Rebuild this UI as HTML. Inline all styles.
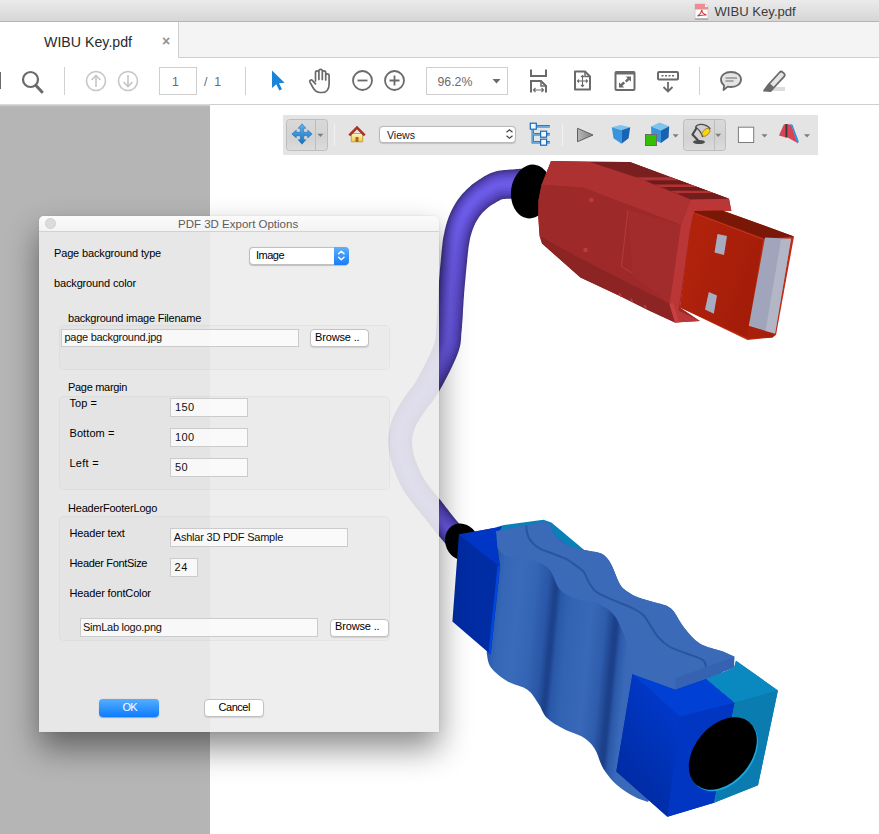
<!DOCTYPE html>
<html>
<head>
<meta charset="utf-8">
<title>WIBU Key.pdf</title>
<style>
html,body{margin:0;padding:0;}
body{width:879px;height:834px;overflow:hidden;position:relative;background:#fff;font-family:"Liberation Sans",sans-serif;}
.abs{position:absolute;}
.t{position:absolute;white-space:nowrap;line-height:1;}
#titlebar{left:0;top:0;width:879px;height:21px;background:linear-gradient(#ebebeb,#d6d6d6);border-bottom:1px solid #b4b4b4;}
#tabbar{left:0;top:22px;width:879px;height:35px;background:#f4f4f4;border-bottom:1px solid #cfcfcf;}
#tab{left:0;top:22px;width:178px;height:36px;background:#fff;border-right:1px solid #cfcfcf;}
#toolbar{left:0;top:58px;width:879px;height:46px;background:#fff;border-bottom:1px solid #cfcfcf;}
#gray{left:0;top:105px;width:210px;height:729px;background:#b5b5b5;}
#grayshade{left:0;top:104px;width:210px;height:3px;background:linear-gradient(rgba(220,220,220,1),rgba(200,200,200,0));}
#tb3d{left:283px;top:115px;width:535px;height:40px;background:#e4e4e4;}
.sep{position:absolute;width:1px;background:#d0d0d0;}
.box{position:absolute;box-sizing:border-box;border:1px solid #cfcfcf;background:#fff;}
/* dialog */
#dlg{left:39px;top:216px;width:400px;height:516px;background:rgba(236,236,236,.9);box-shadow:0 16px 32px rgba(0,0,0,.46),0 0 1.5px rgba(0,0,0,.15);border-radius:5px 5px 0 0;}
#dlgtitle{left:0;top:0;width:400px;height:15px;background:linear-gradient(rgba(252,252,252,.92),rgba(244,244,244,.92));border-bottom:1px solid #d2d2d2;border-radius:5px 5px 0 0;}
.lbl{position:absolute;white-space:nowrap;line-height:1;font-size:11px;letter-spacing:-0.15px;color:#000;}
.inp{position:absolute;box-sizing:border-box;border:1px solid #cbcbcb;background:rgba(255,255,255,.75);}
.inp span{position:absolute;white-space:nowrap;line-height:1;font-size:11px;color:#111;font-family:"Liberation Sans",sans-serif;}
.grp{position:absolute;box-sizing:border-box;border:1px solid rgba(0,0,0,.035);border-radius:5px;background:rgba(0,0,0,.012);}
.btn{position:absolute;box-sizing:border-box;border:1px solid #c2c2c2;border-radius:4px;background:#fff;box-shadow:0 1px 1px rgba(0,0,0,.12);}
</style>
</head>
<body>
<!-- window chrome -->
<div id="titlebar" class="abs"></div>
<div class="t" id="wtitle" style="left:714.5px;top:4.5px;font-size:13.1px;color:#3c3c3c;">WIBU Key.pdf</div>
<svg class="abs" style="left:693px;top:3px" width="18" height="17" viewBox="0 0 18 17">
<path d="M2,1 H12 L15,4 V16 H2 Z" fill="#fbfbfb" stroke="#c9c9c9" stroke-width="0.8"/>
<path d="M2,1 H12 V4 H15 V6.500 H2 Z" fill="#ea8e94"/>
<path d="M4.500,13 C7,11.500 8.500,9 8.800,6.800 C9,9.500 11,11.500 13.500,12 C10.500,11.800 7,12.300 4.500,13 Z" fill="none" stroke="#d0383f" stroke-width="1.100"/>
<path d="M2,16 H15" stroke="#8a8a8a" stroke-width="1"/>
</svg>
<div id="tabbar" class="abs"></div>
<div id="tab" class="abs"></div>
<div class="t" id="tabtitle" style="left:44px;top:35px;font-size:14.2px;color:#2a2a2a;">WIBU Key.pdf</div>
<div class="t" style="left:161.900px;top:34.200px;font-size:14px;font-weight:bold;color:#929292;">×</div>
<div id="toolbar" class="abs"></div>
<div id="gray" class="abs"></div>
<div id="grayshade" class="abs"></div>


<!-- main toolbar icons -->
<div class="box" style="left:159px;top:67px;width:38px;height:28px"></div>
<div class="box" style="left:426px;top:67px;width:82px;height:28px"></div>

<svg class="abs" style="left:0;top:58px" width="879" height="46" viewBox="0 58 879 46">
<g fill="none" stroke="#6a6a6a" stroke-width="2">
<rect x="-2" y="72" width="3" height="17" fill="#6a6a6a" stroke="none"/>
<circle cx="30.5" cy="79.5" r="7.5" stroke-width="2.2"/>
<path d="M36,85.5 L42,92" stroke-width="3" stroke-linecap="round"/>
</g>
<g fill="none" stroke="#c6c6c6" stroke-width="1.6">
<circle cx="96" cy="81" r="9.5"/>
<path d="M96,87 V76 M91.5,80 L96,75.5 L100.500,80"/>
<circle cx="128" cy="81" r="9.500"/>
<path d="M128,75 V86 M123.500,82 L128,86.500 L132.500,82"/>
</g>
<path d="M272,70.500 L272,88 L276.300,84.300 L279.300,90.600 L282,89.300 L279,83.200 L284.600,82.800 Z" fill="#1a84d8"/>
<!-- hand -->
<g fill="none" stroke="#6a6a6a" stroke-width="1.7" stroke-linecap="round" stroke-linejoin="round">
<path d="M315.500,81 V72.500 a1.700,1.700 0 0 1 3.400,0 V79.500 M318.900,72.500 V71 a1.700,1.700 0 0 1 3.400,0 V79.500 M322.300,72.500 a1.700,1.700 0 0 1 3.400,0 V80 M325.700,75.500 a1.700,1.700 0 0 1 3.400,0 V84 c0,5 -2.500,8.500 -7,8.500 h-2 c-3.500,0 -5.500,-2 -7.200,-5 l-3,-5.300 c-0.800,-1.600 1.200,-3 2.600,-1.600 l3,3.200"/>
</g>
<g fill="none" stroke="#6a6a6a" stroke-width="1.8">
<circle cx="362.500" cy="80.500" r="9.500"/>
<path d="M357.500,80.500 H367.500"/>
<circle cx="394.500" cy="80.500" r="9.500"/>
<path d="M389.500,80.500 H399.500 M394.500,75.500 V85.500"/>
</g>
<path d="M492.500,79 H500.500 L496.500,83.500 Z" fill="#6a6a6a"/>
<!-- fit width -->
<g fill="none" stroke="#6a6a6a" stroke-width="2">
<path d="M531,69.500 V76 H546 V69.500"/>
<path d="M531,92.500 V81 H541 L546,86 V92.500"/>
<path d="M541,81 V86 H546" stroke-width="1.500"/>
<path d="M533.500,90 H543.500 M535.500,88 L533.500,90 L535.500,92 M541.500,88 L543.500,90 L541.500,92" stroke-width="1.200"/>
</g>
<!-- fit page -->
<g fill="none" stroke="#6a6a6a" stroke-width="2">
<path d="M575,71.500 H585 L590,76.500 V89.500 H575 Z" stroke-linejoin="round"/>
<path d="M585,71.500 V76.500 H590" stroke-width="1.500"/>
<path d="M582.500,75.500 V86.500 M577.500,81 H587.500 M581,77 L582.500,75.500 L584,77 M581,85 L582.500,86.500 L584,85 M579,79.500 L577.500,81 L579,82.500 M586,79.500 L587.500,81 L586,82.500" stroke-width="1.100"/>
</g>
<!-- fullscreen -->
<g fill="none" stroke="#6a6a6a" stroke-width="2">
<rect x="615.500" y="72" width="19" height="18" rx="1"/>
<path d="M615.500,73 H634.500" stroke-width="3"/>
</g>
<path d="M625.800,76.500 h5.200 v5.200 l-1.700,-1.700 l-2.600,2.600 l-1.800,-1.800 l2.600,-2.600 Z M624.200,87.500 h-5.200 v-5.200 l1.700,1.700 l2.600,-2.600 l1.800,1.800 l-2.600,2.600 Z" fill="#6a6a6a"/>
<!-- keyboard download -->
<g fill="none" stroke="#6a6a6a" stroke-width="2">
<rect x="658" y="72" width="20" height="7.500" rx="1"/>
<path d="M668,82 V91 M663.500,87 L668,91.500 L672.500,87" stroke-width="1.800"/>
</g>
<path d="M661.500,75 h2 v1.600 h-2 Z M665,75 h2 v1.600 h-2 Z M668.500,75 h2 v1.600 h-2 Z M672,75 h2 v1.600 h-2 Z" fill="#6a6a6a"/>
<!-- comment -->
<g fill="#e4e4e4" stroke="#6a6a6a" stroke-width="1.800" stroke-linejoin="round">
<path d="M731,72 c6,0 10,3.200 10,7.500 s-4,7.500 -10,7.500 c-1.200,0 -2.300,-0.100 -3.300,-0.400 l-4.200,3.400 l0.600,-4.600 c-2,-1.400 -3.100,-3.500 -3.100,-5.900 c0,-4.300 4,-7.500 10,-7.500 Z"/>
</g>
<path d="M725.500,78 H737 M725.500,81 H733.500" stroke="#6a6a6a" stroke-width="1.100" fill="none"/>
<!-- highlighter -->
<rect x="767" y="87" width="18" height="4" fill="#dcdcdc"/>
<g stroke="#6a6a6a" stroke-width="1.800" stroke-linejoin="round">
<path d="M769,84 L779.500,72.500 c1,-1.100 2.300,-1.100 3.300,-0.200 l1.200,1.100 c1,0.900 1,2.300 0.100,3.300 L773.500,88 Z" fill="#e4e4e4"/>
<path d="M768.500,84.500 L773,88.500 L770.500,91 L764,90.700 Z" fill="#6a6a6a"/>
</g>
</svg>
<div class="sep" style="left:64px;top:67px;height:28px"></div>
<div class="sep" style="left:245px;top:67px;height:28px"></div>
<div class="sep" style="left:699px;top:67px;height:28px"></div>
<div class="t" style="left:172px;top:75.5px;font-size:12.3px;color:#6a6a6a;">1</div>
<div class="t" style="left:204px;top:75.5px;font-size:12.3px;color:#6a6a6a;">/&nbsp;&nbsp;1</div>
<div class="t" id="zoomtxt" style="left:437.500px;top:75.5px;font-size:12.3px;color:#6a6a6a;">96.2%</div>

<!-- 3D model -->
<svg id="model" class="abs" style="left:0;top:105px" width="879" height="729" viewBox="0 105 879 729">
<defs>
<linearGradient id="gside" gradientUnits="userSpaceOnUse" x1="492.5" y1="600" x2="672.5" y2="617.6">
<stop offset="0" stop-color="#2a58a8"/>
<stop offset="0.05" stop-color="#3667b7"/>
<stop offset="0.14" stop-color="#3a6bbb"/>
<stop offset="0.23" stop-color="#3464b4"/>
<stop offset="0.30" stop-color="#2a56a6"/>
<stop offset="0.335" stop-color="#1d428c"/>
<stop offset="0.35" stop-color="#1d428c"/>
<stop offset="0.375" stop-color="#2a58a8"/>
<stop offset="0.43" stop-color="#3263b3"/>
<stop offset="0.55" stop-color="#3868b7"/>
<stop offset="0.63" stop-color="#2f5dad"/>
<stop offset="0.685" stop-color="#1c408a"/>
<stop offset="0.70" stop-color="#1c408a"/>
<stop offset="0.725" stop-color="#2c5aaa"/>
<stop offset="0.77" stop-color="#3969b8"/>
<stop offset="1" stop-color="#3a6ab8"/>
</linearGradient>
<linearGradient id="gleft" gradientUnits="userSpaceOnUse" x1="616" y1="771" x2="680" y2="717">
<stop offset="0" stop-color="#002ca4"/><stop offset="1" stop-color="#0038c8"/>
</linearGradient>
<linearGradient id="gplug" gradientUnits="userSpaceOnUse" x1="690" y1="260" x2="765" y2="285">
<stop offset="0" stop-color="#b0220c"/><stop offset="1" stop-color="#a21c08"/>
</linearGradient>
</defs>
<!-- cable -->
<polygon points="526.0,168.3 525.2,168.4 524.1,168.4 522.9,168.5 521.4,168.7 519.9,168.8 518.2,168.9 516.5,169.1 514.8,169.2 513.1,169.4 511.6,169.5 510.3,169.6 509.0,169.7 507.6,169.8 506.0,170.0 504.2,170.1 502.4,170.3 500.4,170.5 498.4,170.8 496.2,171.3 493.9,171.9 491.7,172.7 489.6,173.6 487.7,174.5 485.9,175.4 484.3,176.3 482.9,177.2 481.5,178.1 480.3,178.9 479.3,179.5 478.4,180.1 477.5,180.7 476.5,181.4 475.5,182.0 474.6,182.7 473.6,183.4 472.7,184.1 471.8,184.8 470.9,185.6 470.0,186.4 469.2,187.2 468.3,188.0 467.4,188.8 466.4,189.7 465.4,190.8 464.3,191.9 463.2,193.0 462.0,194.3 460.8,195.7 459.7,197.2 458.5,198.7 457.5,200.1 456.6,201.6 455.6,203.1 454.6,204.7 453.7,206.3 452.8,208.0 451.9,209.8 451.0,211.6 450.2,213.4 449.4,215.3 448.6,217.2 448.0,219.1 447.3,221.0 446.7,222.9 446.1,224.9 445.6,226.9 445.1,229.0 444.6,231.1 444.2,233.2 443.7,235.4 443.3,237.6 442.9,239.8 442.6,242.1 442.4,244.3 442.1,246.5 441.9,248.8 441.6,251.2 441.4,253.6 441.2,256.1 440.9,258.7 440.7,261.5 440.4,264.5 440.1,267.6 439.8,270.8 439.6,274.1 439.3,277.5 439.0,280.9 438.8,284.4 438.5,287.9 438.3,291.5 438.0,295.2 437.8,299.1 437.6,303.1 437.4,307.2 437.2,311.3 437.0,315.2 436.7,319.0 436.5,322.6 436.3,325.9 436.0,328.9 435.8,331.7 435.7,334.1 435.6,336.1 435.5,337.6 435.4,338.8 435.3,339.7 435.1,340.6 434.8,341.8 434.3,343.4 433.6,345.5 432.6,348.1 431.3,351.2 429.7,354.7 428.0,358.3 426.1,362.2 424.2,366.0 422.3,369.7 420.4,373.3 418.7,376.5 417.1,379.2 415.8,381.5 414.6,383.5 413.4,385.2 412.2,386.9 411.0,388.5 409.7,390.1 408.4,391.8 407.0,393.6 405.6,395.6 404.2,397.6 403.0,399.5 401.9,401.3 400.8,403.1 399.6,404.9 398.5,406.7 397.4,408.6 396.3,410.6 395.3,412.6 394.3,414.7 393.3,416.8 392.5,418.8 391.8,420.8 391.1,422.8 390.5,424.9 390.0,427.0 389.5,429.1 389.1,431.2 388.7,433.3 388.5,435.5 388.3,437.7 388.2,439.9 388.2,442.1 388.3,444.3 388.5,446.5 388.7,448.6 389.0,450.7 389.3,452.7 389.7,454.7 390.1,456.7 390.5,458.6 391.0,460.7 391.6,462.7 392.2,464.8 392.9,466.7 393.6,468.7 394.3,470.6 395.0,472.4 395.8,474.2 396.5,476.0 397.2,477.7 397.9,479.2 398.6,480.8 399.3,482.3 400.0,483.9 400.8,485.6 401.7,487.3 402.7,489.0 403.7,490.9 405.0,492.8 406.3,494.8 407.9,497.0 409.6,499.3 411.4,501.7 413.2,504.0 415.2,506.4 417.1,508.8 419.0,511.1 420.8,513.3 422.5,515.4 424.0,517.3 425.4,519.1 426.8,520.9 428.1,522.6 429.4,524.2 430.6,525.8 431.9,527.5 433.2,529.1 434.5,530.7 435.8,532.4 437.2,534.1 438.7,535.8 440.3,537.6 441.9,539.5 443.6,541.4 445.2,543.2 446.7,544.9 448.2,546.4 449.4,547.8 450.5,549.0 451.3,549.9 468.7,534.1 467.9,533.2 466.8,532.0 465.5,530.6 464.1,529.1 462.6,527.4 461.1,525.7 459.5,523.9 458.0,522.2 456.5,520.5 455.2,518.9 454.0,517.5 452.8,516.0 451.6,514.5 450.4,513.0 449.2,511.4 448.0,509.8 446.7,508.2 445.3,506.5 443.9,504.6 442.4,502.7 440.8,500.6 439.0,498.5 437.2,496.2 435.3,493.9 433.4,491.6 431.6,489.4 429.9,487.2 428.3,485.1 426.9,483.2 425.7,481.6 424.7,480.0 423.8,478.6 423.1,477.4 422.4,476.2 421.8,475.0 421.2,473.9 420.7,472.6 420.1,471.3 419.5,469.9 418.8,468.3 418.1,466.8 417.5,465.2 416.8,463.7 416.2,462.1 415.6,460.6 415.1,459.1 414.6,457.6 414.2,456.2 413.8,454.8 413.5,453.4 413.1,451.9 412.9,450.3 412.6,448.8 412.4,447.3 412.2,445.9 412.1,444.5 412.0,443.1 412.0,441.8 412.0,440.6 412.1,439.3 412.2,438.1 412.4,436.8 412.7,435.5 412.9,434.3 413.3,433.0 413.6,431.6 414.1,430.3 414.6,429.0 415.1,427.6 415.7,426.2 416.3,425.0 416.9,423.7 417.6,422.4 418.5,421.0 419.4,419.5 420.3,418.0 421.4,416.4 422.5,414.8 423.6,413.0 424.8,411.4 425.8,409.9 426.8,408.5 427.9,407.1 429.2,405.5 430.6,403.8 432.1,401.9 433.7,399.7 435.4,397.3 437.1,394.6 438.9,391.8 440.6,388.6 442.5,385.2 444.5,381.4 446.6,377.5 448.7,373.5 450.7,369.4 452.6,365.4 454.4,361.5 456.0,357.9 457.4,354.5 458.5,351.5 459.3,348.8 460.0,346.2 460.5,343.8 460.8,341.5 461.0,339.4 461.1,337.5 461.2,335.6 461.3,333.6 461.6,331.1 461.9,328.0 462.1,324.4 462.4,320.7 462.7,316.7 462.9,312.7 463.1,308.6 463.4,304.6 463.6,300.6 463.9,296.9 464.1,293.3 464.4,289.9 464.7,286.5 465.0,283.0 465.3,279.7 465.6,276.4 465.9,273.1 466.2,270.0 466.5,267.0 466.8,264.1 467.1,261.3 467.3,258.6 467.6,256.1 467.8,253.8 468.1,251.6 468.3,249.5 468.5,247.5 468.8,245.7 469.1,243.9 469.4,242.2 469.7,240.4 470.0,238.7 470.4,237.1 470.8,235.5 471.3,233.9 471.7,232.4 472.2,231.0 472.7,229.6 473.2,228.3 473.7,226.9 474.2,225.7 474.8,224.5 475.3,223.3 475.9,222.2 476.6,221.1 477.2,220.0 477.9,218.9 478.6,217.8 479.3,216.8 480.0,215.8 480.7,214.9 481.3,214.2 481.8,213.5 482.5,212.8 483.2,212.1 483.9,211.4 484.6,210.7 485.4,210.0 486.2,209.3 487.0,208.5 487.8,207.8 488.5,207.3 489.0,206.8 489.5,206.4 489.9,206.2 490.2,205.9 490.6,205.6 491.1,205.4 491.6,205.0 492.3,204.6 493.2,204.1 494.3,203.4 495.4,202.7 496.5,202.1 497.5,201.4 498.5,200.9 499.5,200.4 500.3,200.0 501.0,199.6 501.6,199.4 502.1,199.3 502.6,199.2 503.2,199.1 504.1,199.0 505.1,198.9 506.3,198.8 507.6,198.8 509.1,198.7 510.6,198.7 512.3,198.6 514.0,198.5 515.5,198.4 517.0,198.3 518.6,198.2 520.2,198.1 521.8,198.0 523.3,197.9 524.7,197.9 526.0,197.8 527.1,197.8 528.0,197.7" fill="#42358c"/>
<polygon points="526.1,169.8 525.3,169.8 524.2,169.9 523.0,170.0 521.5,170.1 520.0,170.2 518.3,170.4 516.6,170.5 514.9,170.7 513.2,170.8 511.7,171.0 510.4,171.1 509.1,171.2 507.6,171.3 506.1,171.4 504.4,171.5 502.5,171.7 500.6,171.9 498.6,172.2 496.5,172.7 494.3,173.3 492.2,174.0 490.2,174.9 488.3,175.8 486.6,176.7 485.0,177.6 483.6,178.5 482.3,179.3 481.1,180.1 480.1,180.7 479.1,181.3 478.2,181.9 477.2,182.5 476.3,183.2 475.4,183.8 474.5,184.5 473.6,185.2 472.7,185.9 471.8,186.6 471.0,187.4 470.1,188.2 469.3,189.0 468.4,189.8 467.4,190.8 466.3,191.8 465.3,192.8 464.2,194.0 463.0,195.3 461.9,196.6 460.7,198.0 459.6,199.5 458.7,200.9 457.7,202.4 456.7,203.8 455.8,205.4 454.9,207.0 454.0,208.7 453.1,210.4 452.2,212.2 451.4,214.0 450.6,215.8 449.9,217.7 449.2,219.5 448.6,221.4 448.0,223.3 447.4,225.3 446.9,227.3 446.4,229.3 445.9,231.4 445.4,233.5 445.0,235.6 444.6,237.8 444.3,240.0 443.9,242.2 443.7,244.5 443.4,246.7 443.2,249.0 443.0,251.3 442.7,253.7 442.5,256.2 442.2,258.8 442.0,261.7 441.7,264.6 441.4,267.7 441.1,270.9 440.9,274.2 440.6,277.6 440.3,281.0 440.1,284.5 439.8,288.0 439.5,291.6 439.3,295.3 439.1,299.2 438.9,303.2 438.7,307.3 438.4,311.3 438.2,315.3 438.0,319.1 437.8,322.7 437.6,326.0 437.3,329.0 437.1,331.8 436.9,334.2 436.8,336.2 436.8,337.7 436.7,338.9 436.6,339.9 436.4,340.9 436.1,342.1 435.5,343.8 434.8,345.9 433.8,348.6 432.4,351.7 430.8,355.2 429.1,358.9 427.2,362.7 425.3,366.6 423.4,370.3 421.5,373.8 419.8,377.1 418.2,379.9 416.9,382.2 415.6,384.1 414.4,386.0 413.2,387.6 411.9,389.3 410.7,390.9 409.4,392.6 408.0,394.4 406.6,396.3 405.3,398.3 404.1,400.2 402.9,402.0 401.8,403.7 400.7,405.5 399.5,407.4 398.4,409.2 397.4,411.2 396.3,413.1 395.4,415.2 394.5,417.2 393.7,419.2 392.9,421.2 392.3,423.2 391.7,425.2 391.1,427.3 390.6,429.3 390.2,431.4 389.9,433.5 389.7,435.6 389.5,437.7 389.4,439.9 389.4,442.1 389.5,444.3 389.6,446.4 389.9,448.5 390.1,450.5 390.5,452.5 390.8,454.5 391.3,456.4 391.7,458.4 392.2,460.4 392.7,462.4 393.4,464.4 394.0,466.4 394.7,468.3 395.4,470.1 396.1,472.0 396.8,473.8 397.6,475.5 398.3,477.2 399.0,478.8 399.6,480.3 400.3,481.9 401.1,483.4 401.9,485.1 402.7,486.7 403.7,488.5 404.8,490.3 405.9,492.2 407.3,494.2 408.8,496.3 410.5,498.6 412.3,500.9 414.2,503.3 416.1,505.7 418.0,508.0 419.9,510.3 421.7,512.5 423.4,514.6 424.9,516.6 426.3,518.4 427.7,520.1 429.0,521.8 430.3,523.5 431.6,525.1 432.8,526.7 434.1,528.4 435.4,530.0 436.7,531.6 438.1,533.3 439.6,535.0 441.2,536.9 442.8,538.7 444.4,540.6 446.1,542.4 447.6,544.1 449.0,545.6 450.3,547.0 451.3,548.2 452.1,549.1 467.9,534.9 467.0,534.0 465.9,532.8 464.7,531.4 463.3,529.9 461.8,528.2 460.2,526.5 458.6,524.7 457.1,523.0 455.6,521.3 454.3,519.7 453.1,518.2 451.9,516.7 450.7,515.2 449.5,513.7 448.3,512.2 447.0,510.6 445.8,508.9 444.4,507.2 443.0,505.4 441.5,503.4 439.8,501.4 438.1,499.2 436.2,497.0 434.4,494.7 432.5,492.4 430.7,490.1 428.9,487.9 427.3,485.8 425.9,483.9 424.7,482.2 423.7,480.7 422.8,479.3 422.0,478.0 421.4,476.7 420.7,475.5 420.2,474.4 419.6,473.1 419.0,471.8 418.4,470.3 417.7,468.8 417.0,467.2 416.4,465.7 415.7,464.1 415.1,462.6 414.5,461.0 414.0,459.5 413.5,458.0 413.1,456.5 412.7,455.1 412.3,453.6 412.0,452.1 411.7,450.5 411.4,449.0 411.2,447.5 411.0,446.0 410.9,444.6 410.8,443.2 410.8,441.8 410.8,440.5 410.9,439.3 411.1,438.0 411.2,436.6 411.5,435.3 411.8,434.0 412.1,432.7 412.5,431.3 412.9,429.9 413.4,428.6 414.0,427.2 414.5,425.8 415.2,424.5 415.8,423.1 416.6,421.8 417.4,420.3 418.3,418.9 419.3,417.3 420.3,415.7 421.4,414.1 422.6,412.4 423.7,410.7 424.8,409.2 425.8,407.8 427.0,406.3 428.2,404.8 429.6,403.0 431.1,401.1 432.7,399.0 434.4,396.6 436.1,394.0 437.8,391.1 439.5,388.0 441.4,384.6 443.4,380.8 445.5,376.9 447.6,372.9 449.6,368.9 451.5,364.9 453.3,361.0 454.9,357.4 456.2,354.1 457.3,351.1 458.1,348.4 458.8,345.9 459.2,343.6 459.5,341.3 459.7,339.3 459.8,337.4 459.9,335.6 460.1,333.5 460.3,331.0 460.6,327.9 460.9,324.3 461.1,320.6 461.4,316.6 461.6,312.6 461.9,308.5 462.1,304.5 462.3,300.6 462.6,296.8 462.9,293.2 463.1,289.8 463.4,286.3 463.7,282.9 464.0,279.6 464.3,276.2 464.6,273.0 464.9,269.9 465.2,266.8 465.5,263.9 465.8,261.2 466.0,258.5 466.3,256.0 466.5,253.6 466.8,251.4 467.0,249.3 467.2,247.4 467.5,245.5 467.8,243.7 468.1,241.9 468.4,240.2 468.8,238.5 469.1,236.8 469.6,235.1 470.0,233.6 470.5,232.1 470.9,230.6 471.4,229.2 471.9,227.8 472.5,226.5 473.0,225.2 473.5,223.9 474.1,222.8 474.7,221.6 475.4,220.4 476.1,219.3 476.7,218.2 477.4,217.1 478.2,216.0 478.9,215.0 479.6,214.1 480.2,213.3 480.8,212.6 481.5,211.9 482.2,211.2 482.9,210.4 483.7,209.7 484.4,209.0 485.3,208.3 486.1,207.5 486.9,206.8 487.6,206.2 488.1,205.7 488.6,205.4 489.0,205.1 489.4,204.8 489.8,204.5 490.3,204.2 490.9,203.8 491.6,203.4 492.5,202.9 493.5,202.2 494.7,201.5 495.8,200.9 496.8,200.2 497.8,199.7 498.8,199.1 499.7,198.7 500.5,198.3 501.2,198.1 501.7,197.9 502.3,197.8 503.0,197.7 503.9,197.6 505.0,197.5 506.2,197.4 507.5,197.3 509.0,197.3 510.6,197.2 512.2,197.1 513.9,197.0 515.4,196.9 516.9,196.8 518.5,196.7 520.1,196.6 521.7,196.6 523.2,196.5 524.6,196.4 525.9,196.3 527.0,196.3 527.9,196.2" fill="#4a3ba2"/>
<polygon points="526.2,171.4 525.4,171.4 524.3,171.5 523.1,171.6 521.6,171.7 520.1,171.8 518.4,172.0 516.7,172.1 515.0,172.3 513.4,172.4 511.9,172.6 510.5,172.7 509.2,172.8 507.7,172.9 506.1,173.0 504.5,173.1 502.7,173.3 500.8,173.5 498.9,173.8 496.8,174.2 494.8,174.8 492.7,175.5 490.8,176.3 489.0,177.2 487.4,178.0 485.8,178.9 484.4,179.8 483.1,180.6 481.9,181.4 480.9,182.0 480.0,182.6 479.0,183.2 478.1,183.8 477.2,184.5 476.3,185.1 475.4,185.7 474.5,186.4 473.7,187.1 472.8,187.8 472.0,188.6 471.1,189.3 470.3,190.1 469.4,191.0 468.4,191.9 467.4,192.9 466.3,193.9 465.3,195.0 464.2,196.3 463.0,197.6 461.9,199.0 460.9,200.4 459.9,201.8 458.9,203.2 458.0,204.7 457.1,206.2 456.2,207.8 455.3,209.4 454.4,211.1 453.5,212.8 452.7,214.6 452.0,216.4 451.3,218.2 450.6,220.0 450.0,221.9 449.4,223.8 448.8,225.7 448.3,227.7 447.8,229.7 447.3,231.7 446.9,233.8 446.4,235.9 446.0,238.1 445.7,240.3 445.4,242.4 445.1,244.6 444.9,246.9 444.6,249.1 444.4,251.4 444.2,253.8 443.9,256.3 443.7,259.0 443.4,261.8 443.1,264.8 442.9,267.9 442.6,271.1 442.3,274.3 442.0,277.7 441.8,281.1 441.5,284.6 441.2,288.1 441.0,291.7 440.7,295.4 440.5,299.3 440.3,303.3 440.1,307.3 439.9,311.4 439.7,315.4 439.4,319.2 439.2,322.8 439.0,326.1 438.7,329.1 438.5,331.9 438.3,334.3 438.2,336.3 438.2,337.8 438.1,339.1 437.9,340.1 437.7,341.2 437.4,342.5 436.9,344.2 436.1,346.4 435.0,349.1 433.7,352.3 432.1,355.8 430.3,359.5 428.5,363.3 426.5,367.2 424.6,370.9 422.7,374.5 421.0,377.8 419.4,380.6 418.0,382.9 416.8,384.9 415.5,386.7 414.3,388.5 413.0,390.1 411.7,391.7 410.4,393.4 409.1,395.2 407.7,397.1 406.4,399.1 405.2,400.9 404.1,402.7 402.9,404.5 401.8,406.3 400.7,408.1 399.6,409.9 398.5,411.8 397.5,413.7 396.6,415.7 395.7,417.7 394.9,419.7 394.2,421.7 393.5,423.6 392.9,425.6 392.4,427.6 391.9,429.6 391.5,431.6 391.2,433.7 391.0,435.7 390.8,437.8 390.7,440.0 390.7,442.1 390.8,444.2 390.9,446.3 391.2,448.3 391.4,450.3 391.8,452.3 392.1,454.3 392.5,456.2 393.0,458.1 393.4,460.1 394.0,462.1 394.6,464.0 395.2,465.9 395.9,467.8 396.6,469.7 397.3,471.5 398.0,473.3 398.8,475.0 399.5,476.7 400.2,478.3 400.8,479.8 401.5,481.3 402.2,482.9 403.0,484.5 403.9,486.1 404.8,487.8 405.9,489.6 407.0,491.5 408.3,493.4 409.9,495.6 411.5,497.8 413.3,500.1 415.2,502.5 417.1,504.9 419.0,507.2 420.9,509.5 422.7,511.7 424.4,513.8 425.9,515.8 427.4,517.6 428.7,519.3 430.0,521.0 431.3,522.7 432.6,524.3 433.8,525.9 435.1,527.6 436.4,529.2 437.7,530.8 439.1,532.5 440.6,534.2 442.1,536.0 443.8,537.9 445.4,539.7 447.0,541.5 448.6,543.2 450.0,544.8 451.2,546.1 452.3,547.3 453.1,548.2 466.7,536.0 465.9,535.0 464.8,533.8 463.5,532.4 462.1,530.9 460.6,529.2 459.1,527.5 457.5,525.7 455.9,524.0 454.5,522.3 453.1,520.7 451.9,519.2 450.7,517.7 449.5,516.2 448.3,514.7 447.1,513.1 445.8,511.5 444.5,509.8 443.2,508.1 441.8,506.3 440.3,504.4 438.7,502.3 436.9,500.2 435.1,497.9 433.2,495.6 431.3,493.3 429.5,491.1 427.7,488.8 426.1,486.8 424.7,484.8 423.5,483.1 422.4,481.5 421.5,480.1 420.7,478.7 420.0,477.5 419.4,476.2 418.8,475.0 418.2,473.7 417.6,472.4 417.0,471.0 416.3,469.4 415.6,467.8 415.0,466.3 414.3,464.7 413.7,463.1 413.1,461.5 412.6,460.0 412.0,458.4 411.6,456.9 411.2,455.5 410.8,454.0 410.5,452.4 410.2,450.8 409.9,449.3 409.7,447.7 409.5,446.2 409.4,444.7 409.3,443.3 409.3,441.9 409.3,440.5 409.4,439.1 409.5,437.8 409.7,436.4 409.9,435.0 410.2,433.7 410.6,432.3 411.0,430.9 411.4,429.5 411.9,428.0 412.5,426.6 413.1,425.2 413.7,423.8 414.4,422.4 415.2,421.0 416.0,419.5 417.0,418.0 417.9,416.5 419.0,414.9 420.1,413.2 421.3,411.5 422.4,409.8 423.5,408.3 424.5,406.8 425.7,405.3 427.0,403.8 428.3,402.0 429.8,400.2 431.4,398.1 433.0,395.7 434.7,393.1 436.4,390.3 438.1,387.2 440.0,383.8 442.0,380.1 444.0,376.2 446.1,372.2 448.1,368.1 450.0,364.2 451.8,360.4 453.3,356.8 454.7,353.5 455.7,350.6 456.5,348.0 457.1,345.6 457.6,343.3 457.9,341.2 458.0,339.2 458.1,337.3 458.3,335.5 458.4,333.4 458.6,330.9 458.9,327.7 459.2,324.2 459.5,320.5 459.7,316.6 459.9,312.5 460.2,308.5 460.4,304.4 460.7,300.5 460.9,296.7 461.2,293.1 461.4,289.7 461.7,286.2 462.0,282.8 462.3,279.4 462.6,276.1 462.9,272.9 463.2,269.7 463.5,266.7 463.8,263.8 464.1,261.0 464.3,258.3 464.6,255.8 464.8,253.5 465.1,251.2 465.3,249.1 465.5,247.1 465.8,245.2 466.1,243.4 466.4,241.6 466.7,239.9 467.1,238.1 467.5,236.4 467.9,234.7 468.3,233.1 468.8,231.6 469.3,230.1 469.8,228.6 470.3,227.2 470.8,225.8 471.4,224.5 471.9,223.2 472.5,222.0 473.2,220.8 473.8,219.6 474.5,218.4 475.2,217.3 475.9,216.1 476.7,215.1 477.4,214.0 478.1,213.1 478.8,212.2 479.4,211.4 480.1,210.7 480.9,209.9 481.6,209.2 482.4,208.4 483.2,207.7 484.0,206.9 484.9,206.2 485.7,205.5 486.4,204.9 487.0,204.4 487.5,204.0 487.9,203.6 488.3,203.3 488.8,203.0 489.3,202.7 489.9,202.3 490.6,201.9 491.5,201.3 492.6,200.7 493.7,200.0 494.8,199.3 495.9,198.7 496.9,198.1 497.9,197.5 498.9,197.0 499.7,196.6 500.5,196.3 501.2,196.1 501.8,196.0 502.7,195.8 503.7,195.7 504.8,195.6 506.1,195.5 507.4,195.5 508.9,195.4 510.5,195.3 512.1,195.3 513.7,195.1 515.2,195.0 516.8,194.9 518.4,194.8 520.0,194.7 521.6,194.7 523.1,194.6 524.5,194.5 525.8,194.4 526.9,194.4 527.8,194.3" fill="#5243b6"/>
<polygon points="526.3,173.3 525.5,173.4 524.5,173.4 523.2,173.5 521.7,173.6 520.2,173.8 518.5,173.9 516.9,174.0 515.2,174.2 513.5,174.3 512.0,174.4 510.7,174.6 509.3,174.7 507.8,174.8 506.3,174.9 504.6,175.0 502.9,175.1 501.1,175.3 499.2,175.6 497.3,176.0 495.3,176.6 493.4,177.2 491.5,178.0 489.8,178.8 488.2,179.7 486.7,180.5 485.4,181.4 484.1,182.2 482.9,182.9 481.9,183.6 480.9,184.2 480.0,184.8 479.1,185.4 478.2,186.0 477.3,186.6 476.5,187.2 475.6,187.8 474.8,188.5 474.0,189.2 473.2,189.9 472.3,190.7 471.5,191.5 470.6,192.3 469.7,193.2 468.7,194.1 467.6,195.2 466.6,196.3 465.5,197.5 464.4,198.7 463.3,200.1 462.3,201.4 461.3,202.8 460.4,204.2 459.5,205.6 458.6,207.1 457.7,208.6 456.8,210.2 456.0,211.9 455.1,213.6 454.3,215.3 453.6,217.1 452.9,218.9 452.2,220.6 451.6,222.5 451.0,224.3 450.5,226.2 450.0,228.1 449.5,230.1 449.0,232.1 448.6,234.1 448.1,236.2 447.7,238.4 447.4,240.5 447.1,242.7 446.8,244.8 446.6,247.0 446.3,249.3 446.1,251.6 445.9,254.0 445.6,256.5 445.4,259.1 445.1,262.0 444.8,264.9 444.6,268.0 444.3,271.2 444.0,274.5 443.7,277.8 443.4,281.3 443.2,284.7 442.9,288.2 442.7,291.8 442.4,295.5 442.2,299.4 442.0,303.4 441.7,307.4 441.5,311.5 441.3,315.5 441.1,319.3 440.9,322.9 440.6,326.2 440.4,329.3 440.1,332.0 440.0,334.4 439.9,336.3 439.8,337.9 439.7,339.2 439.6,340.4 439.4,341.6 439.0,343.0 438.4,344.8 437.7,347.0 436.6,349.8 435.2,353.0 433.6,356.5 431.8,360.2 429.9,364.1 428.0,367.9 426.0,371.7 424.2,375.3 422.4,378.5 420.8,381.4 419.4,383.7 418.1,385.8 416.8,387.7 415.6,389.4 414.3,391.1 413.0,392.8 411.7,394.4 410.4,396.2 409.0,398.0 407.7,400.0 406.5,401.8 405.4,403.6 404.3,405.3 403.1,407.1 402.0,408.9 401.0,410.7 399.9,412.6 398.9,414.5 398.0,416.4 397.1,418.4 396.4,420.3 395.7,422.2 395.0,424.1 394.4,426.1 393.9,428.0 393.5,430.0 393.1,431.9 392.8,433.9 392.5,435.9 392.3,437.9 392.2,440.0 392.2,442.1 392.3,444.1 392.5,446.1 392.7,448.1 393.0,450.1 393.3,452.1 393.6,454.0 394.0,455.9 394.4,457.7 394.9,459.7 395.5,461.6 396.0,463.5 396.7,465.4 397.3,467.3 398.0,469.1 398.7,470.9 399.4,472.7 400.2,474.4 400.9,476.1 401.6,477.7 402.2,479.2 402.9,480.7 403.6,482.2 404.4,483.8 405.2,485.4 406.1,487.1 407.2,488.8 408.3,490.6 409.6,492.6 411.1,494.7 412.7,496.9 414.5,499.2 416.4,501.5 418.3,503.9 420.2,506.2 422.1,508.5 423.9,510.8 425.6,512.9 427.1,514.8 428.6,516.6 429.9,518.4 431.2,520.1 432.5,521.8 433.8,523.4 435.0,525.0 436.3,526.6 437.6,528.2 438.9,529.8 440.3,531.5 441.7,533.2 443.3,535.0 444.9,536.9 446.5,538.7 448.2,540.5 449.7,542.2 451.1,543.7 452.4,545.1 453.4,546.3 454.2,547.2 465.4,537.1 464.6,536.2 463.5,535.0 462.2,533.6 460.8,532.1 459.3,530.4 457.8,528.7 456.2,526.9 454.6,525.1 453.1,523.4 451.8,521.8 450.5,520.3 449.3,518.8 448.1,517.3 446.9,515.7 445.7,514.2 444.4,512.6 443.1,510.9 441.8,509.2 440.4,507.4 438.9,505.5 437.3,503.4 435.5,501.3 433.7,499.0 431.8,496.7 429.9,494.4 428.1,492.2 426.4,489.9 424.7,487.8 423.3,485.9 422.0,484.1 420.9,482.5 420.0,481.0 419.2,479.6 418.5,478.3 417.8,477.0 417.2,475.8 416.6,474.5 416.0,473.1 415.4,471.7 414.7,470.1 414.0,468.5 413.3,466.9 412.7,465.3 412.1,463.7 411.5,462.1 410.9,460.6 410.4,459.0 409.9,457.4 409.5,455.9 409.1,454.4 408.8,452.8 408.5,451.2 408.2,449.6 407.9,448.0 407.8,446.4 407.6,444.9 407.5,443.4 407.5,441.9 407.5,440.4 407.6,439.0 407.7,437.6 407.9,436.2 408.2,434.7 408.5,433.3 408.8,431.8 409.3,430.4 409.7,428.9 410.2,427.4 410.8,425.9 411.4,424.4 412.1,423.0 412.8,421.6 413.6,420.1 414.5,418.6 415.4,417.1 416.4,415.5 417.5,413.9 418.6,412.2 419.7,410.5 420.9,408.8 421.9,407.2 423.0,405.7 424.2,404.2 425.5,402.6 426.9,400.9 428.3,399.0 429.9,397.0 431.4,394.7 433.1,392.2 434.7,389.4 436.5,386.3 438.3,382.9 440.3,379.2 442.3,375.3 444.4,371.3 446.4,367.3 448.3,363.4 450.0,359.6 451.6,356.0 452.9,352.8 453.9,350.0 454.7,347.5 455.3,345.2 455.7,343.0 456.0,341.0 456.1,339.1 456.2,337.2 456.3,335.3 456.5,333.3 456.7,330.7 457.0,327.6 457.3,324.1 457.5,320.4 457.8,316.4 458.0,312.4 458.2,308.4 458.5,304.3 458.7,300.3 459.0,296.6 459.2,293.0 459.5,289.5 459.8,286.1 460.1,282.6 460.4,279.2 460.6,275.9 460.9,272.7 461.2,269.5 461.5,266.5 461.8,263.6 462.1,260.8 462.4,258.2 462.6,255.6 462.9,253.3 463.1,251.0 463.3,248.9 463.6,246.9 463.8,245.0 464.1,243.1 464.4,241.3 464.8,239.5 465.1,237.7 465.5,235.9 466.0,234.2 466.4,232.6 466.9,231.0 467.4,229.5 467.9,228.0 468.4,226.5 468.9,225.1 469.5,223.7 470.1,222.4 470.7,221.1 471.4,219.8 472.1,218.6 472.8,217.4 473.5,216.2 474.2,215.0 475.0,213.9 475.7,212.8 476.5,211.8 477.1,210.9 477.8,210.1 478.6,209.3 479.4,208.5 480.2,207.7 481.0,206.9 481.8,206.1 482.6,205.4 483.5,204.6 484.3,203.9 485.0,203.3 485.6,202.8 486.1,202.3 486.6,202.0 487.1,201.6 487.6,201.3 488.1,200.9 488.7,200.5 489.5,200.1 490.4,199.5 491.5,198.9 492.6,198.2 493.7,197.5 494.8,196.8 495.8,196.2 496.9,195.6 497.9,195.1 498.9,194.7 499.8,194.3 500.5,194.1 501.4,193.9 502.3,193.7 503.4,193.6 504.6,193.5 505.9,193.4 507.3,193.3 508.8,193.2 510.3,193.2 511.9,193.1 513.5,193.0 515.0,192.9 516.6,192.8 518.2,192.7 519.8,192.6 521.4,192.5 523.0,192.4 524.4,192.3 525.7,192.2 526.8,192.2 527.6,192.1" fill="#5a4ac8"/>
<polygon points="526.5,175.5 525.7,175.6 524.6,175.6 523.3,175.7 521.9,175.8 520.3,175.9 518.7,176.1 517.0,176.2 515.3,176.3 513.7,176.5 512.2,176.6 510.8,176.7 509.4,176.8 507.9,176.9 506.4,177.0 504.8,177.1 503.1,177.3 501.3,177.5 499.6,177.8 497.7,178.1 495.9,178.6 494.1,179.2 492.4,180.0 490.8,180.7 489.2,181.5 487.8,182.4 486.5,183.2 485.2,184.0 484.0,184.7 483.0,185.4 482.0,186.0 481.1,186.6 480.2,187.2 479.3,187.7 478.5,188.3 477.7,188.9 476.9,189.5 476.1,190.1 475.4,190.8 474.6,191.5 473.7,192.2 472.9,193.0 472.0,193.8 471.1,194.7 470.1,195.6 469.1,196.6 468.1,197.7 467.0,198.9 466.0,200.1 464.9,201.3 464.0,202.7 463.0,204.0 462.1,205.3 461.2,206.7 460.3,208.2 459.5,209.7 458.6,211.2 457.8,212.8 457.0,214.5 456.2,216.1 455.5,217.9 454.8,219.6 454.1,221.3 453.5,223.1 452.9,224.9 452.4,226.8 451.9,228.6 451.4,230.6 450.9,232.5 450.5,234.5 450.1,236.6 449.7,238.7 449.3,240.8 449.0,242.9 448.8,245.1 448.5,247.3 448.3,249.5 448.1,251.8 447.8,254.2 447.6,256.7 447.3,259.3 447.1,262.1 446.8,265.1 446.5,268.2 446.2,271.4 445.9,274.7 445.7,278.0 445.4,281.4 445.1,284.9 444.9,288.4 444.6,291.9 444.3,295.6 444.1,299.5 443.9,303.5 443.7,307.5 443.5,311.6 443.3,315.6 443.0,319.4 442.8,323.1 442.6,326.4 442.3,329.4 442.1,332.1 441.9,334.5 441.8,336.5 441.7,338.1 441.6,339.4 441.5,340.7 441.2,342.0 440.8,343.5 440.3,345.4 439.4,347.7 438.3,350.5 436.9,353.7 435.3,357.3 433.5,361.1 431.6,364.9 429.7,368.8 427.7,372.6 425.8,376.2 424.0,379.5 422.5,382.3 421.0,384.7 419.7,386.9 418.4,388.8 417.1,390.6 415.8,392.3 414.5,393.9 413.2,395.6 411.9,397.3 410.5,399.1 409.3,401.0 408.1,402.8 406.9,404.6 405.8,406.3 404.7,408.1 403.6,409.9 402.5,411.6 401.5,413.5 400.6,415.3 399.6,417.2 398.8,419.1 398.1,421.0 397.4,422.8 396.7,424.7 396.2,426.6 395.7,428.4 395.2,430.3 394.8,432.3 394.5,434.2 394.3,436.1 394.1,438.1 394.0,440.1 394.0,442.1 394.1,444.0 394.2,446.0 394.5,447.9 394.7,449.9 395.0,451.8 395.4,453.6 395.7,455.5 396.2,457.3 396.6,459.2 397.1,461.1 397.7,463.0 398.3,464.9 399.0,466.7 399.7,468.5 400.4,470.3 401.1,472.0 401.8,473.7 402.5,475.4 403.2,477.0 403.8,478.5 404.5,480.0 405.2,481.5 405.9,483.0 406.8,484.6 407.7,486.2 408.7,487.9 409.8,489.7 411.1,491.6 412.5,493.7 414.1,495.8 415.9,498.1 417.7,500.4 419.6,502.8 421.5,505.1 423.4,507.4 425.2,509.7 426.9,511.8 428.5,513.7 429.9,515.6 431.3,517.3 432.6,519.0 433.9,520.7 435.2,522.3 436.4,523.9 437.7,525.5 438.9,527.1 440.3,528.7 441.6,530.4 443.1,532.1 444.6,533.9 446.2,535.7 447.9,537.5 449.5,539.3 451.0,541.0 452.4,542.6 453.7,543.9 454.7,545.1 455.5,546.0 463.9,538.5 463.1,537.5 462.0,536.4 460.8,535.0 459.4,533.4 457.8,531.7 456.3,530.0 454.7,528.2 453.1,526.4 451.6,524.7 450.3,523.1 449.0,521.6 447.7,520.0 446.5,518.5 445.3,517.0 444.1,515.4 442.8,513.8 441.6,512.1 440.2,510.4 438.8,508.6 437.3,506.7 435.7,504.7 434.0,502.5 432.2,500.3 430.3,498.0 428.4,495.7 426.6,493.4 424.8,491.2 423.1,489.0 421.6,487.0 420.4,485.2 419.3,483.5 418.3,482.0 417.4,480.6 416.7,479.2 416.0,477.9 415.4,476.6 414.8,475.3 414.2,473.9 413.5,472.5 412.9,470.9 412.2,469.3 411.5,467.7 410.8,466.1 410.2,464.5 409.6,462.8 409.0,461.2 408.5,459.6 408.0,458.0 407.5,456.4 407.2,454.8 406.8,453.2 406.5,451.5 406.2,449.9 406.0,448.3 405.8,446.6 405.6,445.0 405.5,443.5 405.5,441.9 405.5,440.4 405.6,438.9 405.7,437.4 405.9,435.9 406.2,434.3 406.5,432.8 406.9,431.3 407.3,429.8 407.8,428.3 408.3,426.7 408.9,425.2 409.5,423.6 410.2,422.1 411.0,420.6 411.8,419.1 412.7,417.6 413.6,416.0 414.6,414.4 415.7,412.7 416.8,411.1 418.0,409.3 419.1,407.6 420.2,406.0 421.4,404.4 422.6,402.9 423.8,401.3 425.2,399.6 426.6,397.8 428.1,395.7 429.7,393.5 431.3,391.0 432.9,388.3 434.6,385.3 436.5,381.9 438.4,378.2 440.4,374.3 442.5,370.4 444.5,366.4 446.3,362.4 448.1,358.7 449.6,355.2 450.9,352.0 451.8,349.3 452.6,346.9 453.2,344.7 453.6,342.6 453.8,340.7 454.0,338.9 454.1,337.1 454.2,335.2 454.3,333.1 454.5,330.5 454.8,327.4 455.1,323.9 455.3,320.2 455.6,316.3 455.8,312.3 456.1,308.2 456.3,304.2 456.5,300.2 456.8,296.4 457.0,292.8 457.3,289.4 457.6,285.9 457.9,282.5 458.1,279.1 458.4,275.7 458.7,272.5 459.0,269.3 459.3,266.3 459.6,263.4 459.9,260.6 460.1,257.9 460.4,255.4 460.6,253.1 460.9,250.8 461.1,248.7 461.3,246.6 461.6,244.7 461.9,242.8 462.2,240.9 462.5,239.0 462.9,237.2 463.3,235.4 463.8,233.7 464.2,232.0 464.7,230.4 465.2,228.8 465.7,227.2 466.2,225.7 466.8,224.3 467.4,222.8 468.0,221.5 468.6,220.1 469.3,218.8 470.0,217.5 470.8,216.2 471.5,215.0 472.3,213.8 473.0,212.6 473.8,211.5 474.6,210.5 475.3,209.5 476.1,208.6 476.8,207.7 477.7,206.9 478.5,206.0 479.3,205.2 480.2,204.4 481.0,203.6 481.9,202.9 482.7,202.2 483.4,201.5 484.1,201.0 484.6,200.5 485.2,200.1 485.7,199.7 486.2,199.3 486.8,198.9 487.5,198.5 488.2,198.0 489.1,197.5 490.2,196.8 491.3,196.2 492.4,195.5 493.5,194.8 494.6,194.1 495.7,193.5 496.8,193.0 497.9,192.5 498.9,192.1 499.8,191.8 500.8,191.5 501.9,191.3 503.1,191.2 504.4,191.0 505.7,190.9 507.2,190.8 508.7,190.8 510.2,190.7 511.8,190.6 513.3,190.5 514.8,190.4 516.4,190.3 518.0,190.2 519.7,190.1 521.3,190.0 522.8,189.9 524.2,189.8 525.5,189.7 526.6,189.7 527.4,189.6" fill="#6251d6"/>
<polygon points="526.6,177.7 525.8,177.8 524.7,177.8 523.5,177.9 522.0,178.0 520.5,178.1 518.8,178.3 517.2,178.4 515.5,178.5 513.9,178.7 512.4,178.8 511.0,178.9 509.5,179.0 508.1,179.1 506.5,179.2 504.9,179.3 503.3,179.4 501.6,179.6 499.9,179.9 498.2,180.2 496.5,180.7 494.9,181.2 493.3,181.9 491.7,182.6 490.3,183.4 488.9,184.2 487.6,185.0 486.3,185.8 485.2,186.5 484.1,187.2 483.1,187.8 482.2,188.4 481.3,188.9 480.5,189.5 479.7,190.0 479.0,190.6 478.2,191.1 477.5,191.7 476.7,192.4 475.9,193.0 475.1,193.8 474.3,194.5 473.4,195.4 472.5,196.2 471.5,197.1 470.6,198.1 469.6,199.1 468.6,200.2 467.6,201.4 466.6,202.6 465.6,203.9 464.7,205.2 463.8,206.5 463.0,207.8 462.1,209.2 461.2,210.7 460.4,212.2 459.6,213.7 458.8,215.3 458.0,217.0 457.3,218.6 456.7,220.3 456.0,222.0 455.4,223.8 454.9,225.5 454.3,227.3 453.8,229.2 453.3,231.1 452.9,233.0 452.4,235.0 452.0,237.0 451.6,239.1 451.3,241.1 451.0,243.2 450.7,245.3 450.5,247.5 450.3,249.7 450.0,252.0 449.8,254.4 449.6,256.9 449.3,259.5 449.0,262.3 448.7,265.3 448.5,268.4 448.2,271.6 447.9,274.8 447.6,278.2 447.3,281.6 447.1,285.1 446.8,288.5 446.5,292.1 446.3,295.7 446.1,299.6 445.8,303.6 445.6,307.7 445.4,311.7 445.2,315.7 445.0,319.6 444.7,323.2 444.5,326.6 444.2,329.6 444.0,332.3 443.8,334.6 443.7,336.6 443.6,338.2 443.5,339.6 443.4,341.0 443.1,342.4 442.7,344.0 442.1,346.0 441.2,348.4 440.1,351.2 438.7,354.5 437.0,358.1 435.2,361.9 433.3,365.8 431.4,369.7 429.4,373.5 427.5,377.1 425.7,380.4 424.1,383.2 422.6,385.7 421.2,387.9 419.9,389.9 418.6,391.7 417.2,393.4 415.9,395.1 414.6,396.7 413.3,398.4 412.1,400.2 410.8,402.0 409.6,403.8 408.5,405.6 407.4,407.3 406.2,409.1 405.2,410.8 404.1,412.6 403.1,414.3 402.2,416.1 401.3,418.0 400.5,419.8 399.7,421.6 399.1,423.4 398.5,425.2 397.9,427.1 397.4,428.9 397.0,430.7 396.6,432.6 396.3,434.4 396.1,436.3 395.9,438.2 395.8,440.1 395.8,442.0 395.9,443.9 396.0,445.8 396.2,447.7 396.5,449.6 396.8,451.5 397.1,453.3 397.5,455.1 397.9,457.0 398.3,458.8 398.8,460.6 399.4,462.5 400.0,464.3 400.6,466.1 401.3,467.9 402.0,469.6 402.7,471.3 403.4,473.0 404.1,474.7 404.8,476.2 405.5,477.8 406.1,479.2 406.8,480.7 407.5,482.2 408.3,483.7 409.2,485.3 410.2,487.0 411.3,488.7 412.5,490.6 413.9,492.6 415.5,494.8 417.3,497.0 419.1,499.3 421.0,501.7 422.9,504.0 424.8,506.3 426.6,508.5 428.3,510.7 429.9,512.6 431.3,514.5 432.7,516.2 434.0,518.0 435.3,519.6 436.6,521.2 437.8,522.8 439.1,524.4 440.3,526.0 441.6,527.6 443.0,529.2 444.4,530.9 445.9,532.7 447.6,534.5 449.2,536.3 450.8,538.1 452.3,539.8 453.7,541.4 455.0,542.8 456.0,543.9 456.9,544.8 462.4,539.8 461.6,538.9 460.5,537.7 459.3,536.3 457.9,534.8 456.4,533.1 454.8,531.3 453.2,529.5 451.6,527.7 450.1,526.0 448.7,524.4 447.4,522.8 446.2,521.3 445.0,519.7 443.7,518.2 442.5,516.6 441.3,515.0 440.0,513.4 438.7,511.6 437.3,509.8 435.8,508.0 434.2,505.9 432.4,503.8 430.6,501.6 428.7,499.3 426.8,496.9 425.0,494.6 423.2,492.4 421.5,490.2 420.0,488.2 418.7,486.3 417.6,484.6 416.6,483.1 415.7,481.6 414.9,480.2 414.2,478.8 413.6,477.5 413.0,476.1 412.3,474.7 411.7,473.3 411.0,471.7 410.3,470.1 409.6,468.5 409.0,466.8 408.3,465.2 407.7,463.5 407.1,461.9 406.6,460.2 406.1,458.5 405.6,456.9 405.2,455.3 404.8,453.6 404.5,451.9 404.2,450.2 404.0,448.5 403.8,446.9 403.6,445.2 403.5,443.6 403.4,441.9 403.5,440.3 403.5,438.7 403.7,437.1 403.9,435.6 404.2,434.0 404.5,432.4 404.9,430.8 405.3,429.2 405.8,427.6 406.4,426.0 407.0,424.4 407.6,422.8 408.3,421.3 409.1,419.7 410.0,418.1 410.9,416.5 411.8,414.9 412.9,413.3 413.9,411.6 415.1,409.9 416.2,408.2 417.4,406.4 418.5,404.8 419.7,403.2 420.9,401.6 422.2,400.0 423.5,398.3 424.9,396.5 426.4,394.5 427.9,392.3 429.5,389.9 431.0,387.3 432.7,384.2 434.6,380.9 436.5,377.2 438.5,373.4 440.6,369.4 442.5,365.4 444.4,361.5 446.1,357.8 447.6,354.4 448.8,351.3 449.8,348.6 450.5,346.3 451.0,344.2 451.4,342.3 451.6,340.5 451.8,338.8 451.9,337.0 452.0,335.1 452.1,332.9 452.4,330.3 452.7,327.2 452.9,323.8 453.2,320.1 453.4,316.2 453.6,312.2 453.9,308.1 454.1,304.1 454.3,300.1 454.6,296.3 454.8,292.7 455.1,289.2 455.4,285.7 455.7,282.3 455.9,278.9 456.2,275.5 456.5,272.3 456.8,269.1 457.1,266.1 457.4,263.2 457.7,260.4 457.9,257.7 458.2,255.2 458.4,252.8 458.6,250.6 458.9,248.4 459.1,246.4 459.4,244.4 459.7,242.4 460.0,240.5 460.3,238.6 460.7,236.7 461.1,234.9 461.6,233.1 462.0,231.4 462.5,229.7 463.0,228.1 463.5,226.5 464.1,225.0 464.7,223.4 465.3,222.0 465.9,220.5 466.6,219.1 467.3,217.7 468.0,216.4 468.8,215.1 469.5,213.8 470.3,212.5 471.1,211.3 471.9,210.2 472.7,209.1 473.5,208.1 474.3,207.1 475.1,206.2 476.0,205.2 476.8,204.4 477.7,203.5 478.6,202.7 479.4,201.9 480.3,201.1 481.1,200.4 481.9,199.7 482.5,199.2 483.1,198.7 483.7,198.2 484.3,197.8 484.8,197.4 485.5,196.9 486.2,196.5 487.0,196.0 487.9,195.5 488.9,194.8 490.0,194.1 491.1,193.4 492.3,192.7 493.4,192.0 494.6,191.4 495.8,190.8 496.9,190.3 498.1,189.8 499.2,189.4 500.3,189.1 501.5,188.9 502.8,188.7 504.1,188.6 505.6,188.5 507.0,188.4 508.5,188.3 510.1,188.3 511.6,188.2 513.1,188.1 514.6,187.9 516.2,187.8 517.8,187.7 519.5,187.6 521.1,187.5 522.6,187.4 524.1,187.3 525.3,187.2 526.4,187.2 527.3,187.1" fill="#6857e0"/>
<polygon points="526.8,179.9 526.0,180.0 524.9,180.0 523.6,180.1 522.2,180.2 520.6,180.3 519.0,180.4 517.3,180.6 515.7,180.7 514.1,180.8 512.6,181.0 511.1,181.1 509.7,181.2 508.2,181.3 506.6,181.3 505.1,181.4 503.5,181.6 501.9,181.8 500.3,182.0 498.7,182.3 497.1,182.7 495.6,183.3 494.1,183.9 492.7,184.5 491.3,185.3 489.9,186.0 488.7,186.8 487.4,187.6 486.3,188.3 485.2,189.0 484.2,189.6 483.3,190.2 482.5,190.7 481.7,191.2 480.9,191.7 480.2,192.3 479.5,192.8 478.8,193.4 478.1,194.0 477.3,194.6 476.5,195.3 475.7,196.1 474.8,196.9 473.9,197.7 473.0,198.6 472.0,199.6 471.1,200.6 470.1,201.6 469.1,202.7 468.2,203.9 467.3,205.1 466.4,206.3 465.5,207.6 464.7,208.9 463.8,210.3 463.0,211.7 462.2,213.2 461.4,214.7 460.6,216.2 459.9,217.8 459.2,219.4 458.5,221.0 457.9,222.7 457.3,224.4 456.8,226.1 456.2,227.9 455.7,229.7 455.3,231.5 454.8,233.4 454.4,235.4 454.0,237.4 453.6,239.4 453.3,241.4 453.0,243.5 452.7,245.6 452.5,247.7 452.2,249.9 452.0,252.2 451.8,254.6 451.5,257.1 451.3,259.7 451.0,262.5 450.7,265.5 450.4,268.5 450.1,271.7 449.8,275.0 449.6,278.3 449.3,281.8 449.0,285.2 448.7,288.7 448.5,292.2 448.2,295.8 448.0,299.7 447.8,303.7 447.5,307.8 447.3,311.8 447.1,315.8 446.9,319.7 446.6,323.3 446.4,326.7 446.1,329.8 445.9,332.4 445.7,334.7 445.6,336.7 445.6,338.3 445.4,339.8 445.2,341.3 444.9,342.8 444.5,344.6 443.9,346.6 443.0,349.1 441.8,352.0 440.4,355.3 438.8,358.9 436.9,362.7 435.0,366.6 433.0,370.5 431.1,374.3 429.1,378.0 427.3,381.3 425.7,384.2 424.2,386.7 422.8,388.9 421.4,391.0 420.0,392.8 418.7,394.5 417.4,396.2 416.1,397.9 414.8,399.5 413.6,401.3 412.3,403.1 411.2,404.9 410.0,406.6 408.9,408.3 407.8,410.1 406.7,411.8 405.7,413.5 404.7,415.2 403.8,417.0 402.9,418.7 402.2,420.5 401.4,422.3 400.8,424.0 400.2,425.8 399.6,427.6 399.2,429.3 398.7,431.1 398.4,432.9 398.1,434.7 397.9,436.5 397.7,438.3 397.6,440.2 397.6,442.0 397.7,443.9 397.8,445.7 398.0,447.5 398.2,449.4 398.5,451.2 398.8,453.0 399.2,454.8 399.6,456.6 400.0,458.3 400.5,460.1 401.1,461.9 401.7,463.7 402.3,465.5 403.0,467.2 403.6,469.0 404.3,470.7 405.0,472.3 405.7,474.0 406.4,475.5 407.1,477.0 407.7,478.5 408.4,480.0 409.1,481.4 409.9,482.9 410.7,484.4 411.7,486.1 412.7,487.8 414.0,489.6 415.4,491.6 417.0,493.7 418.7,495.9 420.5,498.2 422.4,500.6 424.3,502.9 426.1,505.2 428.0,507.4 429.7,509.6 431.3,511.5 432.7,513.4 434.1,515.2 435.4,516.9 436.7,518.5 438.0,520.2 439.2,521.7 440.4,523.3 441.7,524.9 443.0,526.5 444.3,528.1 445.7,529.8 447.3,531.5 448.9,533.3 450.5,535.2 452.1,536.9 453.6,538.6 455.0,540.2 456.3,541.6 457.3,542.7 458.2,543.6 461.0,541.1 460.1,540.2 459.1,539.0 457.8,537.7 456.4,536.1 454.9,534.4 453.3,532.7 451.7,530.9 450.1,529.1 448.6,527.3 447.2,525.7 445.9,524.1 444.6,522.5 443.4,521.0 442.2,519.4 440.9,517.9 439.7,516.2 438.4,514.6 437.1,512.9 435.7,511.1 434.2,509.2 432.6,507.2 430.9,505.1 429.1,502.8 427.2,500.5 425.3,498.2 423.4,495.9 421.6,493.6 419.9,491.4 418.4,489.4 417.1,487.5 415.9,485.7 414.9,484.1 414.0,482.6 413.2,481.1 412.5,479.7 411.8,478.3 411.1,477.0 410.5,475.5 409.9,474.0 409.2,472.5 408.5,470.9 407.8,469.2 407.1,467.6 406.5,465.9 405.8,464.2 405.2,462.5 404.7,460.8 404.1,459.1 403.7,457.4 403.3,455.7 402.9,454.0 402.5,452.3 402.2,450.6 402.0,448.8 401.8,447.1 401.6,445.4 401.5,443.7 401.4,442.0 401.4,440.3 401.5,438.6 401.7,436.9 401.9,435.3 402.2,433.6 402.5,431.9 402.9,430.3 403.3,428.6 403.9,427.0 404.4,425.3 405.1,423.7 405.7,422.0 406.5,420.4 407.3,418.7 408.1,417.1 409.1,415.5 410.1,413.8 411.1,412.2 412.2,410.5 413.3,408.8 414.5,407.0 415.6,405.3 416.8,403.5 418.0,401.9 419.2,400.3 420.5,398.7 421.9,397.0 423.2,395.2 424.7,393.3 426.1,391.2 427.6,388.8 429.2,386.2 430.9,383.2 432.7,379.9 434.6,376.2 436.6,372.4 438.6,368.4 440.6,364.5 442.4,360.6 444.1,356.9 445.6,353.5 446.8,350.5 447.7,347.9 448.4,345.7 448.9,343.7 449.3,342.0 449.5,340.3 449.6,338.6 449.7,336.9 449.8,335.0 450.0,332.8 450.2,330.1 450.5,327.0 450.7,323.6 451.0,319.9 451.2,316.1 451.4,312.1 451.7,308.0 451.9,303.9 452.1,300.0 452.4,296.1 452.6,292.5 452.9,289.0 453.2,285.5 453.4,282.1 453.7,278.7 454.0,275.4 454.3,272.1 454.6,268.9 454.9,265.9 455.2,262.9 455.4,260.1 455.7,257.5 455.9,255.0 456.2,252.6 456.4,250.3 456.6,248.2 456.9,246.1 457.2,244.1 457.4,242.1 457.8,240.1 458.1,238.2 458.5,236.3 458.9,234.4 459.4,232.6 459.9,230.8 460.3,229.1 460.9,227.4 461.4,225.8 462.0,224.2 462.5,222.6 463.2,221.1 463.8,219.6 464.5,218.1 465.2,216.7 466.0,215.3 466.8,213.9 467.6,212.6 468.4,211.3 469.2,210.0 470.0,208.8 470.8,207.7 471.6,206.6 472.5,205.6 473.4,204.6 474.3,203.6 475.2,202.7 476.1,201.8 477.0,201.0 477.8,200.2 478.7,199.4 479.5,198.6 480.3,198.0 481.0,197.4 481.6,196.8 482.2,196.3 482.9,195.9 483.5,195.4 484.2,195.0 484.9,194.5 485.7,194.0 486.6,193.4 487.6,192.8 488.7,192.1 489.8,191.4 491.0,190.7 492.2,190.0 493.4,189.3 494.7,188.6 495.9,188.0 497.2,187.5 498.5,187.1 499.7,186.8 501.1,186.5 502.5,186.3 503.9,186.2 505.4,186.0 506.9,185.9 508.4,185.9 509.9,185.8 511.4,185.7 512.9,185.6 514.4,185.5 516.0,185.3 517.7,185.2 519.3,185.1 520.9,185.0 522.5,184.9 523.9,184.8 525.2,184.7 526.3,184.7 527.1,184.6" fill="#6c5be6"/>
<!-- red connector -->
<ellipse cx="531" cy="191.500" rx="20" ry="27" transform="rotate(8 531 192)" fill="#000"/>
<polygon points="551,161 630,162 729,198.8 731.4,211 694,211 680,307.5 700,321 675,322.5 650,311 620,296 580.4,277.5 542,243.5 539.5,232 538.3,217 538.5,200 541.5,185" fill="#992929"/>
<polygon points="551,161 590,162 636.6,177.3 690.8,199.6 681,225 582.5,187.5 541.5,185" fill="#ad3131"/>
<polygon points="590,162 630,162 729,198.8 690.8,199.6 636.6,177.3" fill="#7a1f1f"/>
<polygon points="636.6,177.3 671.2,177.3 679.8,180.5 644,180.5" fill="#b13333"/>
<polygon points="647.8,180.5 679.8,180.5 690.6,184.5 654,184.5" fill="#6e1b1b"/>
<polygon points="654,184.5 690.6,184.5 697.1,186.9 661,186.9" fill="#b13333"/>
<polygon points="666.9,186.9 697.1,186.9 707.6,190.8 670,190.8" fill="#6e1b1b"/>
<polygon points="670,190.8 707.6,190.8 714.1,193.2 676.5,193.2" fill="#b13333"/>
<polygon points="679,193.2 714.1,193.2 729,198.8 690.8,199.6" fill="#741d1d"/>
<polygon points="541.5,185 582.5,187.5 681,225 669.5,304 580.4,258.5 539.4,236 538.3,217 538.5,200" fill="#9d2929"/>
<polygon points="628,210 681,225 669.5,304 621.4,266.5 632.2,273" fill="#a22b2b"/>
<polygon points="539.4,236 580.4,258.5 669.5,304 675,322.5 650,311 620,296 580.4,277.5 542,243.5" fill="#8c2424"/>
<polygon points="690.8,199.6 729,198.8 731.4,211 694,211 690,230 678.5,310.4 700,321 675,322.5 669.5,304 681,225" fill="#bb3737"/>
<polygon points="669.500,304 675,322.500 679,322.300 673,303" fill="#c84040"/>
<polyline points="628,210.4 621.4,266.5 632.2,273" fill="none" stroke="#b83a3a" stroke-width="1"/>
<circle cx="591.300" cy="200" r="2.300" fill="#c03a3a"/>
<circle cx="585.500" cy="250" r="2.300" fill="#c03a3a"/>
<path d="M619.500,293 l1.500,3.500 M631,298.500 l1.500,3.500 M644.500,305 l1.500,3.500" stroke="#c03a3a" stroke-width="1.600" fill="none"/>
<!-- plug -->
<polygon points="694,211 722.3,210.5 794,236.4 776,335 772.5,337.5 747.5,340 680,307.5 690,230" fill="#c22a12"/>
<polygon points="694,211 722.3,210.5 794,236.4 763.3,239.1 696,214" fill="#7a1808"/>
<polygon points="696,214 763.3,239.1 748.8,326 747.5,338 680,307.5 690,230 693.5,213" fill="url(#gplug)"/>
<path d="M695.500,213.500 L763.300,239.100" stroke="#c8301a" stroke-width="1.200" fill="none"/>
<polygon points="765,237.5 791,238.8 775,333.8 748.8,326" fill="#a0a5bb"/>
<polygon points="781,239.5 791,238.8 775,333.8 765,334" fill="#b2b6c6"/>
<polygon points="748.8,326 775,333.8 772.5,337.5 747.5,338.8" fill="#a8200c"/>
<polygon points="717.5,234 727,236 724,255 714.5,252.5" fill="#a8acc0"/>
<polygon points="708.8,292 717,295.5 713.8,313.8 705,309.5" fill="#a8acc0"/>
<!-- blue connector -->
<ellipse cx="462" cy="542" rx="16.500" ry="19" transform="rotate(-25 462 542)" fill="#000"/>
<polygon points="497,527 504,525 543.5,519.8 551.4,522.4 586,551.5 520,540 497,533" fill="#0a80b8"/>
<path d="M496.0,531.0 C498.7,530.5 506.7,529.0 512.0,528.0 C517.3,527.0 522.4,525.9 527.6,525.0 C532.8,524.1 539.3,522.6 543.0,522.5 C546.7,522.4 548.2,522.3 550.0,524.3 C551.8,526.3 551.1,530.9 554.0,534.3 C556.9,537.7 562.1,542.3 567.2,544.9 C572.3,547.5 579.1,548.8 584.4,550.1 C589.7,551.4 595.3,551.6 598.9,552.8 C602.5,553.9 603.8,554.8 606.0,557.0 C608.2,559.2 609.7,561.4 612.0,566.0 C614.3,570.6 617.3,580.1 620.0,584.4 C622.7,588.7 624.9,589.8 628.0,592.0 C631.1,594.2 633.9,595.9 638.4,597.6 C642.9,599.4 649.6,600.7 655.0,602.5 C660.4,604.3 666.2,604.4 671.0,608.5 C675.8,612.6 679.2,621.6 684.0,627.4 C688.8,633.2 693.5,639.4 699.8,643.4 C706.1,647.4 716.2,649.1 722.0,651.3 C727.8,653.5 732.4,655.9 734.5,656.8 L700,700 L648,802 C645.7,801.1 639.1,799.3 634.0,796.5 C628.9,793.7 622.3,790.0 617.2,785.3 C612.1,780.6 607.0,774.5 603.2,768.4 C599.5,762.3 598.0,753.9 594.7,748.8 C591.4,743.6 588.6,740.8 583.5,737.5 C578.4,734.2 570.0,732.3 563.9,729.0 C557.8,725.7 551.2,722.1 547.0,717.9 C542.8,713.7 541.9,708.6 538.6,703.9 C535.3,699.2 532.5,693.5 527.4,689.8 C522.2,686.0 513.8,685.1 507.7,681.4 C501.6,677.7 494.4,672.1 490.9,667.4 C487.4,662.7 487.4,655.6 486.7,653.3 L496,531 Z" fill="url(#gside)"/>
<polygon points="458.900,534.600 502,526.400 498.500,532 497,545 500,567 490.700,654.400 452.400,621.400" fill="#002ca4"/>
<polygon points="458.900,534.600 502,526.400 498.500,532 497,545 500,567" fill="#0036c6"/>
<polygon points="500,566 490.7,654.4 488.5,652.5 497.5,566" fill="#0046e0"/>
<!-- front box -->
<polygon points="632.5,674 616.3,771.4 667.4,816.7 714,802.8 734.9,702.8 706.3,679 675.5,689.4" fill="#0036c2"/>
<polygon points="706.3,679 733.9,668 736,660.7 777.9,690.4 758,785.3 714,802.8 734.9,702.8" fill="#0a7cb0"/>
<polygon points="632.5,674 616.3,771.4 667.4,816.7 680.2,716.7" fill="url(#gleft)"/>
<polygon points="632.5,674 680.2,716.7 734.9,702.8 706.3,679 675.5,689.4" fill="#0040d4"/>
<polygon points="706.3,679 733.9,668 736,660.7 777.9,690.4 734.9,702.8" fill="#0a88c0"/>
<polygon points="680.2,716.7 734.9,702.8 714,802.8 667.4,816.7" fill="#0036c2"/>
<polygon points="734.9,702.8 777.9,690.4 758,785.3 714,802.8" fill="#0a7cb0"/>
<ellipse cx="724" cy="755" rx="41" ry="28" transform="rotate(-50 724 755)" fill="#18a8e0"/>
<ellipse cx="722.8" cy="753.5" rx="41" ry="28" transform="rotate(-50 722.8 753.5)" fill="#000"/>
<polygon points="734.5,656.8 733.9,668 675.5,689.4 632.5,674 675.5,678 706.3,666.9" fill="#3562b1"/>
<path d="M496.0,531.0 C498.7,530.5 506.7,529.0 512.0,528.0 C517.3,527.0 522.4,525.9 527.6,525.0 C532.8,524.1 539.3,522.6 543.0,522.5 C546.7,522.4 548.2,522.3 550.0,524.3 C551.8,526.3 551.1,530.9 554.0,534.3 C556.9,537.7 562.1,542.3 567.2,544.9 C572.3,547.5 579.1,548.8 584.4,550.1 C589.7,551.4 595.3,551.6 598.9,552.8 C602.5,553.9 603.8,554.8 606.0,557.0 C608.2,559.2 609.7,561.4 612.0,566.0 C614.3,570.6 617.3,580.1 620.0,584.4 C622.7,588.7 624.9,589.8 628.0,592.0 C631.1,594.2 633.9,595.9 638.4,597.6 C642.9,599.4 649.6,600.7 655.0,602.5 C660.4,604.3 666.2,604.4 671.0,608.5 C675.8,612.6 679.2,621.6 684.0,627.4 C688.8,633.2 693.5,639.4 699.8,643.4 C706.1,647.4 716.2,649.1 722.0,651.3 C727.8,653.5 732.4,655.9 734.5,656.8 L706.3,666.9 L675.5,678 L675.5,689.4 L632.5,674 C631.9,670.3 630.5,658.7 629.0,652.0 C627.5,645.3 625.9,640.0 623.4,633.8 C620.9,627.6 618.0,619.8 613.8,614.7 C609.5,609.7 604.3,606.1 597.9,603.5 C591.5,600.9 582.0,601.2 575.6,598.8 C569.2,596.4 564.1,594.2 559.6,589.2 C555.1,584.2 553.8,573.5 548.5,568.5 C543.2,563.5 535.0,561.1 527.8,559.0 C520.6,556.9 510.6,557.6 505.5,555.7 C500.4,553.8 498.8,549.1 497.5,547.8 Z" fill="#3a6ab8"/>
<path d="M526.2,525.5 C526.3,526.7 526.4,530.2 527.0,532.5 C527.6,534.8 528.3,537.0 529.6,539.1 C530.9,541.2 533.0,543.5 535.0,545.3 C537.0,547.0 539.4,548.4 541.9,549.6 C544.4,550.8 547.0,551.4 550.0,552.5 C553.0,553.6 557.0,555.2 560.0,556.5 C563.0,557.8 565.6,558.6 568.0,560.0 C570.4,561.4 572.0,562.6 574.6,564.6 C577.2,566.6 581.3,568.9 583.7,571.9 C586.1,574.9 587.0,579.5 589.1,582.8 C591.2,586.1 592.8,589.2 596.4,591.9 C600.0,594.6 604.9,596.5 611.0,599.2 C617.1,601.9 627.3,605.6 632.8,608.3 C638.2,611.0 640.7,612.5 643.7,615.5 C646.7,618.5 648.6,622.9 651.0,626.5 C653.4,630.1 655.3,634.1 658.3,637.4 C661.3,640.7 664.4,643.8 669.2,646.5 C674.1,649.2 681.8,651.5 687.4,653.8 C693.0,656.0 699.9,657.8 703.0,660.0 C706.1,662.2 705.5,665.8 706.0,667.0" fill="none" stroke="#2c549e" stroke-width="2"/>
</svg>

<!-- 3D toolbar -->
<div id="tb3d" class="abs"></div>
<div class="abs" style="left:285.500px;top:119px;width:42px;height:31.500px;box-sizing:border-box;border:1px solid #bdbdbd;border-radius:3.500px;background:linear-gradient(#d9d9d9,#d2d2d2 60%,#dcdcdc);"></div>
<div class="abs" style="left:315px;top:120px;width:1px;height:29.500px;background:#bdbdbd;"></div>
<div class="abs" style="left:683px;top:119px;width:43px;height:31.500px;box-sizing:border-box;border:1px solid #bdbdbd;border-radius:3.500px;background:linear-gradient(#d9d9d9,#d2d2d2 60%,#dcdcdc);"></div>
<div class="abs" style="left:713.500px;top:120px;width:1px;height:29.500px;background:#bdbdbd;"></div>
<div class="abs" style="left:333.500px;top:124px;width:1.500px;height:22px;background:#f2f2f2;"></div>
<div class="abs" style="left:561.500px;top:124px;width:1.500px;height:22px;background:#f2f2f2;"></div>
<div class="abs" style="left:378.800px;top:126px;width:137.700px;height:17px;box-sizing:border-box;border:1px solid #b9b9b9;border-radius:4px;background:#fff;box-shadow:0 0.500px 1px rgba(0,0,0,.15);"></div>
<div class="t" id="viewstxt" style="left:387px;top:130px;font-size:10.6px;color:#1a1a1a;">Views</div>
<svg class="abs" style="left:283px;top:115px" width="535" height="40" viewBox="283 115 535 40">
<defs>
<linearGradient id="gmove" x1="0" y1="0" x2="0" y2="1"><stop offset="0" stop-color="#5db4f0"/><stop offset="1" stop-color="#1672c4"/></linearGradient>
<linearGradient id="ghome" x1="0" y1="0" x2="0" y2="1"><stop offset="0" stop-color="#fff6c0"/><stop offset="1" stop-color="#f4c84a"/></linearGradient>
<linearGradient id="gplay" x1="0" y1="0" x2="1" y2="0"><stop offset="0" stop-color="#b8b8b8"/><stop offset="1" stop-color="#808080"/></linearGradient>
</defs>
<!-- move -->
<path d="M302,123.800 L305.900,128.300 H303.700 V132.300 H307.700 V130.100 L312.200,134 L307.700,137.900 V135.700 H303.700 V139.700 H305.900 L302,144.200 L298.100,139.700 H300.300 V135.700 H296.300 V137.900 L291.800,134 L296.300,130.100 V132.300 H300.300 V128.300 H298.100 Z" fill="url(#gmove)" stroke="#1a66ae" stroke-width="0.500" stroke-linejoin="round"/>
<path d="M317.400,133.800 h6 l-3,3.300 Z" fill="#7c7c7c"/>
<!-- home -->
<path d="M351.300,133.500 H362.700 V141.800 H351.300 Z" fill="url(#ghome)" stroke="#c89030" stroke-width="0.800"/>
<path d="M355.500,137 H358.500 V141.800 H355.500 Z" fill="#a8681c"/>
<path d="M349.300,135.400 L357,127.500 L364.700,135.400" fill="none" stroke="#a83422" stroke-width="2.600" stroke-linejoin="miter"/>
<!-- select chevrons -->
<path d="M506.500,132.300 L509.500,129.800 L512.500,132.300 M506.500,135.700 L509.500,138.200 L512.500,135.700" fill="none" stroke="#444" stroke-width="1.200"/>
<!-- tree -->
<g fill="none" stroke="#1a6ab8" stroke-width="2.400">
<path d="M536.500,126.300 H549.800 M532.800,129.500 V142.300 H549.800 M532.800,134.300 H549.800"/>
</g>
<g fill="none" stroke="#9cd0f4" stroke-width="0.800">
<path d="M536.500,126.300 H549.800 M532.800,129.500 V142.300 H549.800 M532.800,134.300 H549.800"/>
</g>
<g fill="#f4f8fc" stroke="#1a6ab8" stroke-width="1.200">
<rect x="530.300" y="123.200" width="6" height="6"/>
<rect x="540.600" y="131.200" width="6" height="6"/>
<rect x="540.600" y="139.200" width="6" height="6"/>
</g>
<!-- play -->
<path d="M577.500,128.300 L593,135 L577.500,141.700 Z" fill="url(#gplay)" stroke="#606060" stroke-width="1" stroke-linejoin="round"/>
<!-- cube 1 -->
<path d="M611.800,127.200 L620.500,125 L630.200,127.200 L621.500,130.300 Z" fill="#7cc4ee"/>
<path d="M611.800,127.200 L621.500,130.300 V143.800 L613.500,138.300 Z" fill="#3a94dc"/>
<path d="M621.500,130.300 L630.200,127.200 L628.600,138.300 L621.500,143.800 Z" fill="#1a62b2"/>
<!-- cube 2 -->
<path d="M651,126.600 L659.500,122.500 L669.200,126.200 L661,130.600 Z" fill="#7cc4ee"/>
<path d="M651,126.600 L661,130.600 V143 L651.500,139 Z" fill="#3a94dc"/>
<path d="M661,130.600 L669.200,126.200 L668.600,137.500 L661,143 Z" fill="#1a62b2"/>
<rect x="645.500" y="134.500" width="11" height="11" fill="#34c000" stroke="#6c6c6c" stroke-width="1"/>
<path d="M672.600,134.200 h6 l-3,3.300 Z" fill="#7c7c7c"/>
<!-- lamp -->
<ellipse cx="699" cy="142" rx="6" ry="2" fill="#4e4e4e"/>
<path d="M699,141.500 L692.500,134.500 L697.500,126.500" fill="none" stroke="#4a4a4a" stroke-width="2.200" stroke-linejoin="round" stroke-linecap="round"/>
<path d="M695.500,127 C698,123 705.500,123.500 710,128.500 L702.500,136.500 C701,132 698.500,129 695.500,127 Z" fill="#cfcfcf" stroke="#4a4a4a" stroke-width="1.200" stroke-linejoin="round"/>
<ellipse cx="706" cy="132.300" rx="4.800" ry="2.900" transform="rotate(-45 706 132.300)" fill="#ffd10f" stroke="#8a7420" stroke-width="0.700"/>
<path d="M715.200,133.800 h6 l-3,3.300 Z" fill="#7c7c7c"/>
<!-- white square -->
<rect x="738.400" y="127.200" width="15.300" height="15.300" fill="#fff" stroke="#7c7c7c" stroke-width="1"/>
<path d="M761.500,134.200 h6 l-3,3.300 Z" fill="#7c7c7c"/>
<!-- clip icon -->
<path d="M779,135.500 L783.800,124.500 L786,124 V137.500 Z" fill="#d84456"/>
<path d="M785.500,124 H787.800 V137.500 H785.500 Z" fill="#383838"/>
<path d="M787.600,124 L791.500,125.200 L797.500,143 L787.600,137.500 Z" fill="#d84456"/>
<path d="M789,123.600 L792.500,124.800 L798.800,141.500 L797.500,143.800 L791.500,125.600 Z" fill="#2492e4"/>
<path d="M804,134.200 h6 l-3,3.300 Z" fill="#7c7c7c"/>
</svg>

<!-- dialog -->
<div id="dlg" class="abs">
<div id="dlgtitle" class="abs"></div>
<div class="abs" style="left:5.500px;top:1.800px;width:11px;height:11px;border-radius:50%;background:#dcdcdc;box-sizing:border-box;border:0.500px solid #cfcfcf;"></div>
<div class="lbl" id="dt" style="left:139px;top:3px;color:#5c5c5c;font-size:11.5px;letter-spacing:0;">PDF 3D Export Options</div>
<div class="lbl" style="left:15px;top:31.7px;">Page background type</div>
<div class="lbl" style="left:15px;top:61.7px;">background color</div>
<!-- select -->
<div class="abs" style="left:209.700px;top:31px;width:99.800px;height:17.500px;box-sizing:border-box;border:1px solid #c0c0c0;border-radius:4px;background:#fff;box-shadow:0 0.500px 1px rgba(0,0,0,.2);"></div>
<div class="abs" style="left:295px;top:31px;width:14.500px;height:17.500px;border-radius:0 4px 4px 0;background:linear-gradient(#5eb0fb,#1a7cf6);"></div>
<svg class="abs" style="left:295px;top:31.300px" width="15" height="17" viewBox="0 0 15 17"><path d="M4.600,6.800 L7.300,4.200 L10,6.800 M4.600,10.200 L7.300,12.800 L10,10.200" fill="none" stroke="#fff" stroke-width="1.400" stroke-linecap="round" stroke-linejoin="round"/></svg>
<div class="lbl" style="left:217px;top:34.2px;letter-spacing:-0.5px;">Image</div>
<!-- group 1 -->
<div class="lbl" style="left:29px;top:96.7px;letter-spacing:-0.23px;">background image Filename</div>
<div class="grp" style="left:19.500px;top:109px;width:331px;height:45px;"></div>
<div class="inp" style="left:21.500px;top:112.500px;width:238px;height:18.500px;"><span style="left:3px;top:2.8px;letter-spacing:-0.28px;">page background.jpg</span></div>
<div class="btn" style="left:270.500px;top:113px;width:59px;height:18px;"></div>
<div class="lbl" style="left:276px;top:115.7px;">Browse ..</div>
<!-- group 2 -->
<div class="lbl" style="left:29px;top:165.7px;letter-spacing:-0.3px;">Page margin</div>
<div class="grp" style="left:19.500px;top:179.500px;width:331px;height:94px;"></div>
<div class="lbl" style="left:30.500px;top:181.7px;letter-spacing:0.05px;">Top =</div>
<div class="lbl" style="left:30.500px;top:211.7px;letter-spacing:0.08px;">Bottom =</div>
<div class="lbl" style="left:30.500px;top:241.7px;letter-spacing:0.25px;">Left =</div>
<div class="inp" style="left:131px;top:182px;width:78px;height:19px;"><span style="left:4px;top:2.6px;letter-spacing:0.37px;">150</span></div>
<div class="inp" style="left:131px;top:212px;width:78px;height:19px;"><span style="left:4px;top:2.6px;letter-spacing:0.37px;">100</span></div>
<div class="inp" style="left:131px;top:242px;width:78px;height:19px;"><span style="left:4px;top:2.6px;letter-spacing:0.37px;">50</span></div>
<!-- group 3 -->
<div class="lbl" style="left:29px;top:286.7px;letter-spacing:-0.2px;">HeaderFooterLogo</div>
<div class="grp" style="left:19.500px;top:299.500px;width:331px;height:125px;"></div>
<div class="lbl" style="left:30.500px;top:311.5px;">Header text</div>
<div class="lbl" style="left:30.500px;top:341.5px;letter-spacing:-0.33px;">Header FontSize</div>
<div class="lbl" style="left:30.500px;top:371.5px;">Header fontColor</div>
<div class="inp" style="left:131px;top:312px;width:178px;height:19px;"><span style="left:2.8px;top:2.8px;letter-spacing:-0.22px;">Ashlar 3D PDF Sample</span></div>
<div class="inp" style="left:131px;top:342px;width:28px;height:19px;"><span style="left:3.5px;top:2.8px;letter-spacing:0.6px;">24</span></div>
<div class="inp" style="left:41px;top:402px;width:238px;height:19px;"><span style="left:2px;top:2.8px;letter-spacing:-0.26px;">SimLab logo.png</span></div>
<div class="btn" style="left:290.500px;top:403px;width:59px;height:17.500px;"></div>
<div class="lbl" style="left:296px;top:405.2px;">Browse ..</div>
<!-- buttons -->
<div class="btn" style="left:60px;top:483px;width:60px;height:18px;border:0;background:linear-gradient(#56aefc,#0c7bff);box-shadow:0 0.500px 1px rgba(0,0,0,.3);"></div>
<div class="lbl" style="left:83.4px;top:485.9px;color:#fff;letter-spacing:-0.6px;">OK</div>
<div class="btn" style="left:165px;top:483.3px;width:59.5px;height:17.4px;"></div>
<div class="lbl" style="left:179.6px;top:485.9px;letter-spacing:-0.5px;">Cancel</div>
</div>
</body>
</html>
